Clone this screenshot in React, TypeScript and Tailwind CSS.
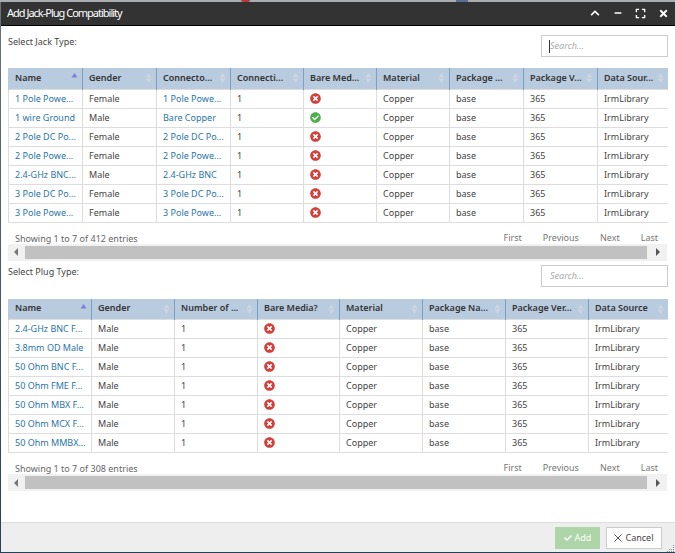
import React from 'react';
import {FaCheck, FaCheckCircle, FaChevronUp, FaExpand, FaMinus, FaTimes, FaTimesCircle} from 'react-icons/fa';

type Column = {
  title: string;
  width: number;
  sorted?: boolean;
};

type Row = string[];

const jackColumns: Column[] = [
  {title: 'Name', width: 74, sorted: true},
  {title: 'Gender', width: 74},
  {title: 'Connecto...', width: 74},
  {title: 'Connecti...', width: 73},
  {title: 'Bare Med...', width: 73},
  {title: 'Material', width: 73},
  {title: 'Package ...', width: 74},
  {title: 'Package V...', width: 74},
  {title: 'Data Sour...', width: 70},
];

const jackRows: Row[] = [
  ['1 Pole Powe...', 'Female', '1 Pole Powe...', '1', 'no'],
  ['1 wire Ground', 'Male', 'Bare Copper', '1', 'yes'],
  ['2 Pole DC Po...', 'Female', '2 Pole DC Po...', '1', 'no'],
  ['2 Pole Powe...', 'Female', '2 Pole Powe...', '1', 'no'],
  ['2.4-GHz BNC...', 'Male', '2.4-GHz BNC', '1', 'no'],
  ['3 Pole DC Po...', 'Female', '3 Pole DC Po...', '1', 'no'],
  ['3 Pole Powe...', 'Female', '3 Pole Powe...', '1', 'no'],
];

const plugColumns: Column[] = [
  {title: 'Name', width: 83, sorted: true},
  {title: 'Gender', width: 83},
  {title: 'Number of ...', width: 83},
  {title: 'Bare Media?', width: 82},
  {title: 'Material', width: 83},
  {title: 'Package Na...', width: 83},
  {title: 'Package Ver...', width: 83},
  {title: 'Data Source', width: 79},
];

const plugRows: Row[] = [
  ['2.4-GHz BNC F...', 'Male', '1', 'no'],
  ['3.8mm OD Male', 'Male', '1', 'no'],
  ['50 Ohm BNC F...', 'Male', '1', 'no'],
  ['50 Ohm FME F...', 'Male', '1', 'no'],
  ['50 Ohm MBX F...', 'Male', '1', 'no'],
  ['50 Ohm MCX F...', 'Male', '1', 'no'],
  ['50 Ohm MMBX...', 'Male', '1', 'no'],
];

const SortIcon = ({active}: {active?: boolean}) => (
  <svg width="7" height="12" viewBox="0 0 7 12" className="absolute right-[4px] top-[4px]">
    <path d="M3.5 1 L6.5 5.5 H0.5 Z" fill={active ? '#7d80d8' : '#ccd6e3'} />
    {!active && <path d="M3.5 11 L6.5 6.5 H0.5 Z" fill="#ccd6e3" />}
  </svg>
);

const DataTable = ({
  columns,
  rows,
  linkColumns,
}: {
  columns: Column[];
  rows: Row[];
  linkColumns: number[];
}) => (
  <table className="w-[659px] table-fixed border-collapse">
    <colgroup>
      {columns.map(col => (
        <col key={col.title} style={{width: col.width}} />
      ))}
    </colgroup>
    <thead>
      <tr className="h-[21px] bg-[#b9cbdf]">
        {columns.map((col, i) => (
          <th
            key={col.title}
            className={`relative whitespace-nowrap pb-[2px] pl-[6px] text-left font-semibold text-[#333] ${
              i > 0 ? 'border-l border-[#7d9fc4]' : 'border-l border-[#b9cbdf]'
            }`}
          >
            {col.title}
            <SortIcon active={col.sorted} />
          </th>
        ))}
      </tr>
    </thead>
    <tbody>
      {rows.map(row => (
        <tr key={row[0]} className="h-[19px]">
          {columns.map((col, i) => {
            const value = i < row.length ? row[i] : i === row.length ? 'Copper' : i === row.length + 1 ? 'base' : i === row.length + 2 ? '365' : 'IrmLibrary';
            return (
              <td
                key={col.title}
                className={`whitespace-nowrap border border-[#dddddd] px-[6px] pb-[1px] pt-0 leading-[17px] ${
                  i === columns.length - 1 ? 'border-r-0' : ''
                } ${linkColumns.includes(i) ? 'text-[#2a75a9]' : 'text-[#444]'}`}
              >
                {value === 'no' ? (
                  <FaTimesCircle className="text-[11px] text-[#d43f3a]" />
                ) : value === 'yes' ? (
                  <FaCheckCircle className="text-[11px] text-[#4cae4c]" />
                ) : (
                  value
                )}
              </td>
            );
          })}
        </tr>
      ))}
    </tbody>
  </table>
);

const Pager = ({info}: {info: string}) => (
  <div className="flex h-[21px] w-[659px] items-start justify-between pl-[7px] pr-[9px] text-[#666]">
    <span className="mt-[9px]">{info}</span>
    <div className="mt-[8px] flex gap-[21px] text-[#777]">
      <span>First</span>
      <span>Previous</span>
      <span>Next</span>
      <span>Last</span>
    </div>
  </div>
);

const ScrollBar = () => (
  <div className="flex h-[17px] w-[659px] items-center bg-[#f1f1f1]">
    <div className="flex w-[17px] justify-center">
      <svg width="5" height="8" viewBox="0 0 5 8">
        <path d="M4 0 V8 L0 4 Z" fill="#777" />
      </svg>
    </div>
    <div className="h-[13px] flex-1 bg-[#c1c1c1]" />
    <div className="flex w-[20px] justify-center">
      <svg width="5" height="8" viewBox="0 0 5 8">
        <path d="M1 0 V8 L5 4 Z" fill="#555" />
      </svg>
    </div>
  </div>
);

const SearchBox = ({focused}: {focused?: boolean}) => (
  <div className="flex h-[22px] w-[127px] items-center border border-[#cccccc] bg-white pl-[7px] italic text-[#aaa]">
    {focused && <span className="h-[13px] w-px bg-[#333]" />}
    <span className={focused ? '' : 'ml-px'}>Search...</span>
  </div>
);

const HeaderButton = ({children}: {children: React.ReactNode}) => (
  <span className="flex w-[23px] justify-center">{children}</span>
);

const App = () => {
  return (
    <div className="relative flex h-[553px] w-[675px] flex-col bg-linear-to-b from-[#6f7478] to-[#1f4257] font-['Open_Sans',sans-serif] text-[9px]">
      <div className="h-[2px] bg-[#a9adb0]" />
      <span className="absolute left-[241px] top-0 h-[2px] w-[9px] rounded-b-full bg-[#b23a3a]" />
      <span className="absolute left-[456px] top-0 h-[2px] w-[12px] bg-[#5a6f96]" />

      <div className="ml-px flex h-[550px] flex-col bg-white">
        <header className="flex h-[24px] shrink-0 items-center justify-between border-b border-black bg-[#333333] pb-px pl-[6px] text-white">
          <span className="text-[11px] tracking-[-1px]">Add Jack-Plug Compatibility</span>
          <div className="flex items-center text-[10px]">
            <HeaderButton>
              <FaChevronUp />
            </HeaderButton>
            <HeaderButton>
              <FaMinus className="text-[8px]" />
            </HeaderButton>
            <HeaderButton>
              <FaExpand className="text-[11px]" />
            </HeaderButton>
            <HeaderButton>
              <FaTimes className="text-[11px]" />
            </HeaderButton>
          </div>
        </header>

        <main className="flex-1 pl-[7px]">
          <div className="flex h-[42px] w-[660px] items-start justify-between pt-[9px]">
            <span className="text-[#444]">Select Jack Type:</span>
            <SearchBox focused />
          </div>
          <DataTable columns={jackColumns} rows={jackRows} linkColumns={[0, 2]} />
          <Pager info="Showing 1 to 7 of 412 entries" />
          <ScrollBar />

          <div className="flex h-[38px] w-[660px] items-start justify-between pt-[4px]">
            <span className="text-[#444]">Select Plug Type:</span>
            <SearchBox />
          </div>
          <DataTable columns={plugColumns} rows={plugRows} linkColumns={[0]} />
          <Pager info="Showing 1 to 7 of 308 entries" />
          <ScrollBar />
        </main>

        <footer className="relative flex h-[30px] shrink-0 items-center justify-end gap-[6px] border-t border-[#dddddd] bg-[#eeeeee] pr-[13px]">
          <button className="flex h-[22px] w-[45px] items-center justify-center gap-[3px] bg-[#add5a8] text-white">
            <FaCheck className="text-[8px]" />
            Add
          </button>
          <button className="flex h-[22px] w-[56px] items-center justify-center gap-[3px] border border-[#cccccc] bg-white text-[#444]">
            <svg width="8" height="8" viewBox="0 0 8 8">
              <path d="M0.5 0.5 L7.5 7.5 M7.5 0.5 L0.5 7.5" stroke="#444" strokeWidth="0.9" />
            </svg>
            Cancel
          </button>
          <svg width="8" height="8" viewBox="0 0 8 8" className="absolute bottom-0 right-0">
            <path d="M6 1h1v1H6zM6 3h1v1H6zM6 5h1v1H6zM4 5h1v1H4zM2 5h1v1H2zM6 7h1v1H6zM4 7h1v1H4zM2 7h1v1H2zM0 7h1v1H0z" fill="#888" />
          </svg>
        </footer>
      </div>
    </div>
  );
};

export default App;
